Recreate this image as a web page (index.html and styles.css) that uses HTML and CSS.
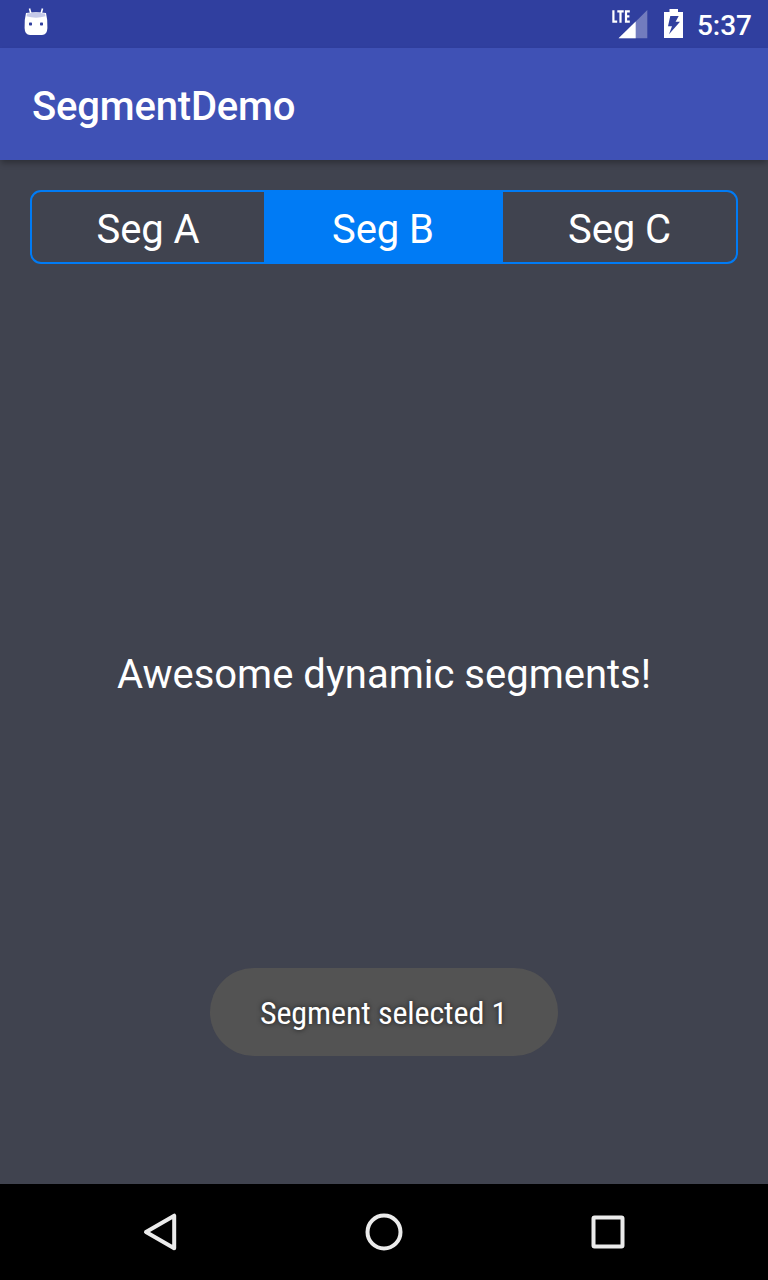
FILE: index.html
```html
<!DOCTYPE html>
<html lang="en">
<head>
<meta charset="utf-8">
<title>SegmentDemo</title>
<link rel="stylesheet" href="styles.css">
</head>
<body>
<div class="screen">
  <header class="status-bar">
    <svg class="status-notification" width="24" height="28" viewBox="0 0 24 28">
      <path d="M5.500 .5 7 6M18.500 .5 17 6" stroke="#fff" stroke-width="1.600" fill="none"/>
      <path d="M2 5Q12 3.500 22 5Q23.800 12 23.400 20Q23.200 27 18 27H6Q.8 27 .6 20Q.2 12 2 5Z" fill="#fff"/>
      <path d="M3 5.500Q12 4 21 5.500L21.500 8.300Q12 11 2.500 8.300Z" fill="#c5cae9"/>
      <rect x="5" y="14.500" width="3" height="3" rx=".7" fill="#303f9f"/>
      <rect x="16" y="14.500" width="3" height="3" rx=".7" fill="#303f9f"/>
    </svg>
    <svg class="status-signal" width="38" height="32" viewBox="0 0 38 32">
      <path d="M35.300 2V30.300H7Z" fill="#fff" fill-opacity=".32"/>
      <path d="M23.700 13.600V30.300H6.500Z" fill="#fff"/>
      <path d="M1.400 2.200V13.700H5.200M5.300 3.300H11.700M8.500 3.300V14.800M17.800 3.300H14V13.700H17.800M14 8.400H17.400" fill="none" stroke="#fff" stroke-width="2.200"/>
    </svg>
    <svg class="status-battery" width="20" height="30" viewBox="0 0 20 30">
      <path d="M5.500 0H14V3H19V29H0V3H5.500Z" fill="#fff"/>
      <path d="M6.300 7H14.700L11.600 12.700H16L5 25.300 8 17.300H4Z" fill="#303f9f"/>
    </svg>
    <span class="clock">5:37</span>
  </header>
  <div class="app-bar"><h1 class="app-title">SegmentDemo</h1></div>
  <main class="content">
    <div class="segments">
      <div class="segment">Seg A</div>
      <div class="segment segment-selected">Seg B</div>
      <div class="segment">Seg C</div>
    </div>
    <p class="message">Awesome dynamic segments!</p>
    <div class="toast"><span class="toast-text">Segment selected 1</span></div>
  </main>
  <nav class="nav-bar">
    <svg class="nav-icon" width="48" height="48" viewBox="0 0 48 48"><path d="M38.200 7.700V40.300L10 24Z" fill="none" stroke="#ebebeb" stroke-width="4" stroke-linejoin="round"/></svg>
    <svg class="nav-icon" width="48" height="48" viewBox="0 0 48 48"><circle cx="24" cy="24" r="16.500" fill="none" stroke="#ebebeb" stroke-width="4"/></svg>
    <svg class="nav-icon" width="48" height="48" viewBox="0 0 48 48"><rect x="9.500" y="9.500" width="29" height="29" rx="1" fill="none" stroke="#ebebeb" stroke-width="4"/></svg>
  </nav>
</div>
</body>
</html>
```
FILE: styles.css
```css
* { box-sizing: border-box; }
body { margin: 0; font-family: Roboto, sans-serif; color: #fff; }
.screen { width: 768px; height: 1280px; display: flex; flex-direction: column; background: #40434f; overflow: hidden; }
.status-bar { height: 48px; background: #303f9f; display: flex; align-items: flex-start; padding: 0 16px 0 24px; flex: none; }
.status-notification { margin-top: 8px; }
.status-signal { margin-left: auto; margin-top: 8px; }
.status-battery { margin-left: 14px; margin-top: 9px; }
.clock { margin-left: 13px; font-size: 28px; font-weight: 500; line-height: 52px; }
.app-bar { height: 112px; flex: none; background: #3f51b5; display: flex; align-items: center; padding: 6px 32px 0; box-shadow: 0 4px 6px -1px rgba(0,0,0,.3); }
.app-title { margin: 0; font-size: 40px; font-weight: 500; line-height: 48px; letter-spacing: -.18px; }
.content { flex: 1; padding: 30px 30px 128px; display: flex; flex-direction: column; align-items: center; }
.segments { width: 708px; height: 74px; display: grid; grid-template-columns: 232px 239px 233px; border: 2px solid #007bf5; border-radius: 11px; overflow: hidden; }
.segment { display: flex; align-items: center; justify-content: center; padding-top: 4px; font-size: 40px; letter-spacing: -.1px; }
.segment-selected { background: #007bf5; padding-right: 1px; }
.message { margin: auto 0; padding-top: 117px; font-size: 40px; line-height: 48px; }
.toast { width: 348px; height: 88px; border-radius: 44px; background: #535353; display: flex; align-items: center; justify-content: center; padding: 1px 1px 0 0; }
.toast-text { font-family: "Roboto Condensed", Roboto, sans-serif; font-stretch: 75%; font-size: 32px; letter-spacing: -.1px; white-space: nowrap; text-shadow: 0 0 5px rgba(0,0,0,.7); }
.nav-bar { height: 96px; flex: none; background: #000; display: flex; justify-content: center; align-items: center; gap: 176px; }
```
